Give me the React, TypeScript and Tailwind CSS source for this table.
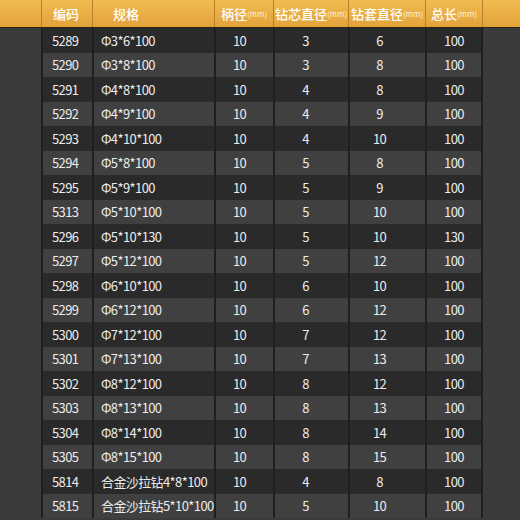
import React from "react";

const ROWS: [string, string, number, number, number, number][] = [
  ["5289", "Φ3*6*100", 10, 3, 6, 100],
  ["5290", "Φ3*8*100", 10, 3, 8, 100],
  ["5291", "Φ4*8*100", 10, 4, 8, 100],
  ["5292", "Φ4*9*100", 10, 4, 9, 100],
  ["5293", "Φ4*10*100", 10, 4, 10, 100],
  ["5294", "Φ5*8*100", 10, 5, 8, 100],
  ["5295", "Φ5*9*100", 10, 5, 9, 100],
  ["5313", "Φ5*10*100", 10, 5, 10, 100],
  ["5296", "Φ5*10*130", 10, 5, 10, 130],
  ["5297", "Φ5*12*100", 10, 5, 12, 100],
  ["5298", "Φ6*10*100", 10, 6, 10, 100],
  ["5299", "Φ6*12*100", 10, 6, 12, 100],
  ["5300", "Φ7*12*100", 10, 7, 12, 100],
  ["5301", "Φ7*13*100", 10, 7, 13, 100],
  ["5302", "Φ8*12*100", 10, 8, 12, 100],
  ["5303", "Φ8*13*100", 10, 8, 13, 100],
  ["5304", "Φ8*14*100", 10, 8, 14, 100],
  ["5305", "Φ8*15*100", 10, 8, 15, 100],
  ["5814", "合金沙拉钻4*8*100", 10, 4, 8, 100],
  ["5815", "合金沙拉钻5*10*100", 10, 5, 10, 100],
];

const GRID = "grid grid-cols-[41px_51px_122px_59px_75px_77px_58px_37px]";

// 数值列略偏左，与原图一致
const NUM_PAD = ["pr-[10px]", "pr-[12px]", "pr-[16px]", "pr-0"];

function Unit() {
  return <span className="text-[8px] font-normal text-[#fff4dc]">(mm)</span>;
}

export default function App() {
  return (
    <div
      className="w-[520px] h-[520px] overflow-hidden bg-[#3b3b3b] text-[13px] text-[#ececec]"
      style={{ fontFamily: '"Noto Sans CJK SC", "Noto Sans", sans-serif' }}
    >
      {/* 表头 */}
      <div
        className={`${GRID} h-[28px] bg-gradient-to-b from-[#f1bb52] to-[#e3a23a] border-b border-[#2a2418] text-white font-medium`}
      >
        <div />
        <div className="flex items-center pl-[11px] border-l border-[#b98028]">编码</div>
        <div className="flex items-center pl-[20px] border-l border-[#b98028]">规格</div>
        <div className="flex items-center justify-center border-l border-[#b98028] whitespace-nowrap">
          柄径<Unit />
        </div>
        <div className="flex items-center justify-center border-l border-[#b98028] whitespace-nowrap">
          钻芯直径<Unit />
        </div>
        <div className="flex items-center justify-center border-l border-[#b98028] whitespace-nowrap">
          钻套直径<Unit />
        </div>
        <div className="flex items-center justify-center border-l border-r border-[#b98028] whitespace-nowrap">
          总长<Unit />
        </div>
        <div />
      </div>

      {/* 数据 */}
      {ROWS.map((r, i) => {
        const bg = i % 2 === 0 ? "bg-[#2a2a2a]" : "bg-[#404040]";
        return (
          <div key={r[0]} className={`${GRID} h-[24.5px] tracking-[-0.6px]`}>
            <div />
            <div className={`flex items-center pl-[9px] border-l-2 border-[#1f1f1f] ${bg}`}>
              {r[0]}
            </div>
            <div
              className={`flex items-center pl-[7px] border-l-2 border-[#1f1f1f] whitespace-nowrap ${bg}`}
            >
              {r[1]}
            </div>
            {[r[2], r[3], r[4], r[5]].map((v, j) => (
              <div
                key={j}
                className={`flex items-center justify-center border-l-2 border-[#1f1f1f] ${
                  j === 3 ? "border-r-2" : ""
                } ${NUM_PAD[j]} ${bg}`}
              >
                {v}
              </div>
            ))}
            <div />
          </div>
        );
      })}
    </div>
  );
}
